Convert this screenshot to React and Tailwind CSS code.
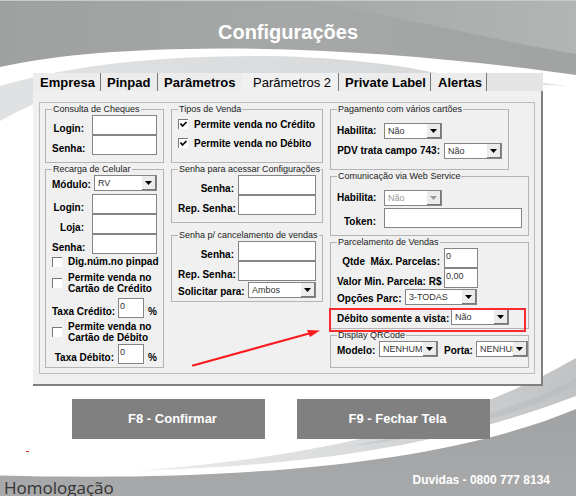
import React from "react";

const bold = "text-[10px] leading-3 font-bold text-black whitespace-nowrap";
const fieldText = "text-[9px] text-[#333]";

function Group({ title, className = "", children }) {
  return (
    <fieldset className={`min-w-0 border border-[#b4b4b4] px-[6px] ${className}`}>
      <legend className="px-px text-[9px] leading-3 text-[#222] whitespace-nowrap">{title}</legend>
      {children}
    </fieldset>
  );
}

function TextField({ id, label, labelClass = "", inputClass = "", value = "", type = "text", children }) {
  return (
    <div className="flex h-5 items-end gap-1">
      <label htmlFor={id} className={`${bold} shrink-0 text-right ${labelClass}`}>{label}</label>
      <input
        id={id}
        type={type}
        defaultValue={value}
        className={`h-5 min-w-0 border border-[#858585] bg-white px-px pb-1 outline-none ${fieldText} ${inputClass}`}
      />
      {children}
    </div>
  );
}

function SelectField({ id, label, labelClass = "", boxClass = "", rowClass = "h-4 items-end", value, options, disabled }) {
  return (
    <div className={`flex gap-1 ${rowClass}`}>
      <label htmlFor={id} className={`${bold} shrink-0 text-right ${labelClass}`}>{label}</label>
      <div className={`relative h-4 min-w-0 ${boxClass}`}>
        <select
          id={id}
          defaultValue={value}
          disabled={disabled}
          className={`block h-4 w-full appearance-none border border-[#858585] bg-white pl-[3px] leading-3 outline-none disabled:text-[#999] disabled:opacity-100 ${fieldText}`}
        >
          {options.map((o) => <option key={o}>{o}</option>)}
        </select>
        <span className="pointer-events-none absolute top-px right-px flex h-[14px] w-[14px] items-center justify-center border-r border-b border-[#777] bg-[#ececec]">
          <svg viewBox="0 0 7 4" className="h-1 w-[7px]">
            <path d="M0 0h7L3.500 4z" fill={disabled ? "#999" : "#000"} />
          </svg>
        </span>
      </div>
    </div>
  );
}

function Check({ id, checked, children, className = "" }) {
  return (
    <div className={`flex items-center gap-[6px] ${className}`}>
      <span className="relative h-[10px] w-[10px] shrink-0">
        <input
          id={id}
          type="checkbox"
          defaultChecked={checked}
          className="peer block h-[10px] w-[10px] appearance-none border-t border-l border-[#777] bg-white"
        />
        <svg viewBox="0 0 10 10" className="pointer-events-none absolute inset-0 hidden h-[10px] w-[10px] peer-checked:block">
          <path d="M2.500 4.500l2 2.500L8.500 3" fill="none" stroke="#000" strokeWidth="1.700" />
        </svg>
      </span>
      <label htmlFor={id} className="text-[10px] leading-[11px] font-bold whitespace-nowrap text-black">{children}</label>
    </div>
  );
}

function Backdrop() {
  return (
    <svg className="absolute inset-0 -z-10 h-full w-full" viewBox="0 0 576 496" preserveAspectRatio="none" aria-hidden="true">
      <defs>
        <linearGradient id="top" x1="0" x2="1">
          <stop offset="0" stopColor="#9fa1a1" />
          <stop offset="0.5" stopColor="#a6a8a8" />
          <stop offset="1" stopColor="#a2a4a4" />
        </linearGradient>
        <linearGradient id="shine" x1="0" x2="1">
          <stop offset="0" stopColor="#a6a8a8" />
          <stop offset="1" stopColor="#b3b5b4" />
        </linearGradient>
        <linearGradient id="veil" x1="0" x2="1">
          <stop offset="0" stopColor="#dfe1e2" />
          <stop offset="1" stopColor="#d6d8d9" />
        </linearGradient>
        <linearGradient id="sweep" x1="0" x2="1">
          <stop offset="0" stopColor="#eceded" />
          <stop offset="0.5" stopColor="#d9dbdc" />
          <stop offset="1" stopColor="#c0c2c3" />
        </linearGradient>
        <linearGradient id="bottom" x1="0" x2="0" y1="0" y2="1">
          <stop offset="0" stopColor="#a0a2a3" />
          <stop offset="1" stopColor="#a8a9aa" />
        </linearGradient>
      </defs>
      <rect width="576" height="496" fill="#fff" />
      <path d="M0 121C30 104 60 92 100 84H480C400 60 300 54 220 56.500C140 58 60 68 0 86z" fill="url(#veil)" />
      <path d="M480 75L568 86L500 83z" fill="#e0e2e2" />
      <path d="M0 0H576V75C470 60 340 48 220 48.500C130 49 60 54 0 67z" fill="url(#top)" />
      <path d="M360 0H576V54C500 42 430 22 300 0z" fill="url(#shine)" />
      <path d="M0 0H576V1H0z" fill="#c9cbcb" />
      <path d="M135 471C330 456 470 420 576 358V402C470 450 300 466 135 471z" fill="url(#sweep)" />
      <path d="M350 446C430 432 520 410 576 378V385C520 416 430 438 350 446z" fill="#b4b7b8" fillOpacity="0.400" />
      <path d="M135 471C300 466 440 448 576 396V412L300 476z" fill="#fff" />
      <path d="M0 475.500C250 482 450 462 576 409V496H0z" fill="url(#bottom)" />
    </svg>
  );
}

const TABS = [
  ["Empresa", "w-[68px] pl-[7px] border-r"],
  ["Pinpad", "w-[57px] pl-[6px] border-r"],
  ["Parâmetros", "w-[84px] pl-[6px]"],
  ["Parâmetros 2", "w-[97px] pl-[11px] border-r"],
  ["Private Label", "w-[92px] pl-[6px] border-r"],
  ["Alertas", "w-[56px] pl-[7px] border-r"],
];

export default function App() {
  return (
    <div className="relative isolate flex min-h-screen flex-col overflow-hidden font-['Liberation_Sans',Arial,sans-serif]">
      <Backdrop />
      <h1 className="pt-5 text-center text-xl leading-6 font-bold text-white">Configurações</h1>

      <main className="mx-[33px] mt-[29px]">
        <div role="tablist" className="flex h-[18px] bg-[#e4e4e4]">
          {TABS.map(([name, box], i) => (
            <button
              key={name}
              role="tab"
              aria-selected={i === 3}
              className={`h-[18px] shrink-0 border-[#777] text-left text-[13px] leading-5 whitespace-nowrap text-black ${i === 3 ? "bg-[#f0f0f0]" : "bg-[#ececec] font-bold"} ${box}`}
            >
              {name}
            </button>
          ))}
        </div>

        <div className="border-r-2 border-b-2 border-[#808080] bg-[#f0f0f0] px-[6px] pt-[11px] pb-[10px]">
          <div className="grid grid-cols-[minmax(0,119fr)_minmax(0,152fr)_minmax(0,199fr)] gap-[7px] border border-[#bdbdbd] px-[5px] pb-[5px]">
            <div className="flex flex-col">
              <Group title="Consulta de Cheques" className="h-[60px]">
                <TextField id="ch-login" label="Login:" labelClass="w-9 pr-1" inputClass="flex-1" />
                <TextField id="ch-senha" label="Senha:" labelClass="w-9 pr-1" inputClass="flex-1" />
              </Group>
              <Group title="Recarga de Celular" className="h-[205px]">
                <SelectField id="modulo" label="Módulo:" labelClass="w-[38px]" boxClass="flex-1" value="RV" options={["RV"]} />
                <div className="mt-[3px]">
                  <TextField id="r-login" label="Login:" labelClass="w-9 pr-1" inputClass="flex-1" />
                  <TextField id="r-loja" label="Loja:" labelClass="w-9 pr-1" inputClass="flex-1" />
                  <TextField id="r-senha" label="Senha:" labelClass="w-9 pr-1" inputClass="flex-1" />
                </div>
                <Check id="dig" className="mt-[2px]">Dig.núm.no pinpad</Check>
                <Check id="p-cred" className="mt-[5px]">Permite venda no<br />Cartão de Crédito</Check>
                <div className="mt-1">
                  <TextField id="t-cred" label="Taxa Crédito:" labelClass="w-[62px]" inputClass="w-[34px]" value="0"><span className={bold}>%</span></TextField>
                </div>
                <Check id="p-deb" className="mt-[3px]">Permite venda no<br />Cartão de Débito</Check>
                <div className="mt-px">
                  <TextField id="t-deb" label="Taxa Débito:" labelClass="w-[62px]" inputClass="w-[34px]" value="0"><span className={bold}>%</span></TextField>
                </div>
              </Group>
            </div>

            <div className="flex flex-col">
              <Group title="Tipos de Venda" className="h-[60px]">
                <Check id="v-cred" checked className="h-[18px]">Permite venda no Crédito</Check>
                <Check id="v-deb" checked className="h-5">Permite venda no Débito</Check>
              </Group>
              <Group title="Senha para acessar Configurações" className="h-[60px]">
                <TextField id="a-senha" label="Senha:" labelClass="w-14" inputClass="flex-1" type="password" />
                <TextField id="a-rep" label="Rep. Senha:" labelClass="w-14" inputClass="flex-1" type="password" />
              </Group>
              <Group title="Senha p/ cancelamento de vendas" className="mt-[6px] h-[73px]">
                <TextField id="c-senha" label="Senha:" labelClass="w-14" inputClass="flex-1" type="password" />
                <TextField id="c-rep" label="Rep. Senha:" labelClass="w-14" inputClass="flex-1" type="password" />
                <div className="mt-px">
                  <SelectField id="solicitar" label="Solicitar para:" labelClass="w-[66px]" boxClass="flex-1" value="Ambos" options={["Ambos"]} />
                </div>
              </Group>
              <svg viewBox="0 0 130 38" className="mt-[27px] ml-5 h-[38px] w-[130px]" aria-hidden="true">
                <path d="M2 36.500L118 4.500" stroke="#fb1b1f" strokeWidth="2.200" strokeLinecap="round" />
                <path d="M129 1.500L116 1L119 8z" fill="#fb1b1f" />
              </svg>
            </div>

            <div className="flex flex-col">
              <Group title="Pagamento com vários cartões" className="mr-5 h-[67px]">
                <SelectField id="pg-hab" label="Habilita:" labelClass="w-[39px]" boxClass="ml-1 w-[58px]" rowClass="mt-[6px] h-5 items-center" value="Não" options={["Não", "Sim"]} />
                <SelectField id="pdv" label="PDV trata campo 743:" labelClass="w-[103px]" boxClass="w-[58px]" rowClass="h-5 items-center" value="Não" options={["Não", "Sim"]} />
              </Group>
              <Group title="Comunicação via Web Service" className="h-[66px]">
                <SelectField id="ws-hab" label="Habilita:" labelClass="w-[39px]" boxClass="ml-1 w-[58px]" rowClass="mt-[6px] h-5 items-center" value="Não" options={["Não", "Sim"]} disabled />
                <TextField id="token" label="Token:" labelClass="w-[39px]" inputClass="ml-1 flex-1" />
              </Group>
              <Group title="Parcelamento de Vendas" className="h-[93px]">
                <TextField id="qtde" label={"Qtde\u00a0\u00a0Máx. Parcelas:"} labelClass="w-[103px]" inputClass="w-[34px]" value="0" />
                <TextField id="valor" label="Valor Min. Parcela: R$" labelClass="w-[103px]" inputClass="w-[34px]" value="0,00" />
                <SelectField id="opcoes" label="Opções Parc:" labelClass="w-[64px]" boxClass="w-[72px]" rowClass="mt-px h-4 items-end" value="3-TODAS" options={["3-TODAS"]} />
                <div className="relative mt-1">
                  <SelectField id="deb-vista" label="Débito somente a vista:" labelClass="w-[110px]" boxClass="w-[58px]" rowClass="h-4 items-end" value="Não" options={["Não", "Sim"]} />
                  <div className="pointer-events-none absolute -top-px -right-1 -left-2 h-6 border-2 border-[#f92b2e]" />
                </div>
              </Group>
              <Group title="Display QRCode" className="h-[39px]">
                <div className="-mr-1 flex items-end gap-[6px]">
                  <SelectField id="modelo" label="Modelo:" labelClass="w-[38px]" boxClass="w-[59px]" value="NENHUM" options={["NENHUM"]} />
                  <SelectField id="porta" label="Porta:" labelClass="w-7" boxClass="w-[52px]" value="NENHUI" options={["NENHUI"]} />
                </div>
              </Group>
            </div>
          </div>
        </div>
      </main>

      <div className="mt-[13px] flex gap-8 pr-[86px] pl-[72px]">
        <button className="h-10 flex-1 bg-[#808080] pl-2 text-[13px] font-bold text-white">F8 - Confirmar</button>
        <button className="h-10 flex-1 bg-[#808080] pl-2 text-[13px] font-bold text-white">F9 - Fechar Tela</button>
      </div>

      <span className="mt-[12px] ml-[26px] h-px w-[3px] bg-[#d02020]" />
      <footer className="mt-auto flex items-start justify-between pr-[26px] pl-1">
        <span className="h-[18px] font-['Open_Sans','Noto_Sans',sans-serif] text-[17px] leading-5 text-[#333]">Homologação</span>
        <span className="-mt-1 text-xs leading-3 font-bold text-white">Duvidas - 0800 777 8134</span>
      </footer>
    </div>
  );
}
